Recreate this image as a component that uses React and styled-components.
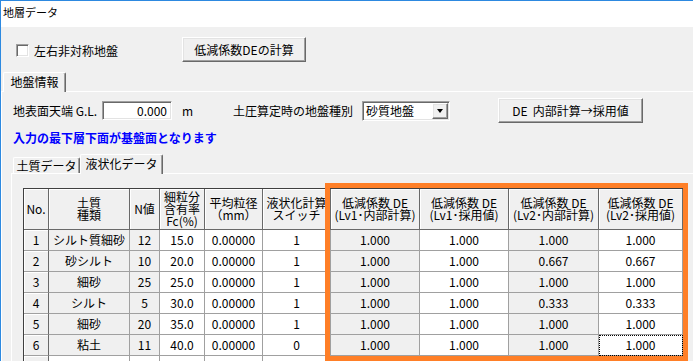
import styled, { createGlobalStyle, css } from "styled-components";

const GlobalStyle = createGlobalStyle`
  html, body {
    margin: 0;
    padding: 0;
    background: #f0f0f0;
  }
  body {
    font-family: "Noto Sans CJK JP", "Noto Sans", sans-serif;
    font-size: 12px;
    color: #000;
  }
  * { box-sizing: border-box; }
`;

const raised = css`
  border: 1px solid;
  border-color: #fff #696969 #696969 #fff;
  box-shadow: inset -1px -1px #a0a0a0, inset 1px 1px #e3e3e3;
`;

const sunken = css`
  border: 1px solid;
  border-color: #a0a0a0 #fff #fff #a0a0a0;
  box-shadow: inset 1px 1px #696969, inset -1px -1px #e3e3e3;
`;

const Window = styled.div`
  width: 693px;
  height: 361px;
  overflow: hidden;
  border-top: 1px solid #2d89e0;
  border-left: 1px solid #2d89e0;
  display: flex;
  flex-direction: column;
`;

const TitleBar = styled.div`
  height: 26px;
  flex-shrink: 0;
  background: #fff;
  padding: 3px 0 0 2px;
  font-size: 11px;
  line-height: 17px;
`;

const Client = styled.div`
  flex: 1;
  background: #f0f0f0;
`;

const TopRow = styled.div`
  display: flex;
  align-items: center;
  height: 25px;
  margin-top: 10px;
  padding-left: 15px;
`;

const CheckLabel = styled.label`
  width: 166px;
  display: flex;
  align-items: center;
  gap: 5px;
  padding-top: 2px;
`;

const CheckBox = styled.span`
  width: 13px;
  height: 13px;
  background: #fff;
  ${sunken};
`;

const Button = styled.div`
  width: ${(p) => p.$w}px;
  height: 25px;
  margin-left: ${(p) => p.$ml || 0}px;
  background: #f0f0f0;
  ${raised};
  display: flex;
  align-items: center;
  justify-content: center;
  line-height: 14px;
`;

const TabStrip = styled.div`
  display: flex;
  align-items: flex-end;
  height: 19px;
  margin-top: ${(p) => p.$mt}px;
  padding-left: ${(p) => p.$pl}px;
`;

const Tab = styled.div`
  position: relative;
  z-index: ${(p) => (p.$active ? 1 : 0)};
  width: ${(p) => p.$w}px;
  height: ${(p) => (p.$active ? 20 : 16)}px;
  margin-bottom: ${(p) => (p.$active ? -1 : 0)}px;
  padding-bottom: ${(p) => (p.$active ? 2 : 0)}px;
  background: #f0f0f0;
  border-top: 1px solid #fff;
  border-left: 1px solid #fff;
  border-right: 1px solid #696969;
  border-radius: 2px 2px 0 0;
  box-shadow: inset -1px 0 #a0a0a0;
  display: flex;
  align-items: center;
  justify-content: center;
  line-height: 14px;
`;

const Panel = styled.div`
  border-top: 1px solid #fff;
  border-left: 1px solid #fff;
  padding: ${(p) => p.$pad};
`;

const FieldRow = styled.div`
  display: flex;
  align-items: center;
  height: 25px;
  padding-left: 2px;
`;

const FieldLabel = styled.span`
  width: ${(p) => p.$w}px;
  margin-left: ${(p) => p.$ml || 0}px;
  white-space: nowrap;
`;

const TextBox = styled.div`
  width: 70px;
  height: 19px;
  background: #fff;
  ${sunken};
  text-align: right;
  padding-right: 4px;
  line-height: 17px;
`;

const Combo = styled.div`
  width: 88px;
  height: 20px;
  background: #fff;
  ${sunken};
  padding: 1px;
  display: flex;
`;

const ComboText = styled.span`
  flex: 1;
  padding-left: 2px;
  line-height: 16px;
`;

const ComboButton = styled.span`
  width: 16px;
  height: 16px;
  background: #f0f0f0;
  ${raised};
  display: flex;
  align-items: center;
  justify-content: center;
  &::before {
    content: "";
    border-left: 3.5px solid transparent;
    border-right: 3.5px solid transparent;
    border-top: 4px solid #000;
  }
`;

const Notice = styled.div`
  margin-top: 7px;
  padding-left: 2px;
  color: #0000ff;
  font-weight: bold;
  line-height: 15px;
`;

const GridWrap = styled.div`
  position: relative;
  width: 660px;
`;

const Grid = styled.div`
  display: grid;
  grid-template-columns: 25px 81px 30px 45px 58px 68px 89px 89px 90px 84px;
  grid-template-rows: 41px;
  grid-auto-rows: 21px;
  border-top: 1px solid #404040;
  border-left: 1px solid #404040;
`;

const HeadCell = styled.div`
  background: #f0f0f0;
  border-right: 1px solid #696969;
  border-bottom: 1px solid #696969;
  box-shadow: inset 1px 1px #fff;
  display: flex;
  align-items: center;
  justify-content: center;
  text-align: center;
  white-space: pre;
  line-height: 12px;
  overflow: hidden;
`;

const FixedCell = styled.div`
  background: #f0f0f0;
  border-right: 1px solid #696969;
  border-bottom: 1px solid #a0a0a0;
  box-shadow: inset 1px 1px #fff;
  text-align: center;
  line-height: 20px;
`;

const Cell = styled.div`
  background: ${(p) => (p.$gray ? "#f0f0f0" : "#fff")};
  border-right: 1px solid #a0a0a0;
  border-bottom: 1px solid #a0a0a0;
  text-align: center;
  line-height: 20px;
  white-space: nowrap;
  overflow: hidden;
  ${(p) =>
    p.$focus &&
    css`
      outline: 1px dotted #000;
      outline-offset: -1px;
    `}
`;

const Highlight = styled.div`
  position: absolute;
  left: 302px;
  top: -5px;
  width: 363px;
  height: 178px;
  border: 5px solid #ff7f27;
  pointer-events: none;
`;

const headers = [
  "No.",
  "土質\n種類",
  "N値",
  "細粒分\n含有率\nFc(%)",
  "平均粒径\n（mm）",
  "液状化計算\nスイッチ",
  "低減係数 DE\n(Lv1･内部計算)",
  "低減係数 DE\n(Lv1･採用値)",
  "低減係数 DE\n(Lv2･内部計算)",
  "低減係数 DE\n(Lv2･採用値)",
];

const grayCols = [1, 2, 6, 8];

const rows = [
  [1, "シルト質細砂", 12, "15.0", "0.00000", 1, "1.000", "1.000", "1.000", "1.000"],
  [2, "砂シルト", 10, "20.0", "0.00000", 1, "1.000", "1.000", "0.667", "0.667"],
  [3, "細砂", 25, "25.0", "0.00000", 1, "1.000", "1.000", "1.000", "1.000"],
  [4, "シルト", 5, "30.0", "0.00000", 1, "1.000", "1.000", "0.333", "0.333"],
  [5, "細砂", 20, "35.0", "0.00000", 1, "1.000", "1.000", "1.000", "1.000"],
  [6, "粘土", 11, "40.0", "0.00000", 0, "1.000", "1.000", "1.000", "1.000"],
  ["", "", "", "", "", "", "", "", "", ""],
];

const App = () => {
  return (
    <>
      <GlobalStyle />
      <Window>
        <TitleBar>地層データ</TitleBar>
        <Client>
          <TopRow>
            <CheckLabel>
              <CheckBox />
              <span>左右非対称地盤</span>
            </CheckLabel>
            <Button $w={124}>低減係数DEの計算</Button>
          </TopRow>

          <TabStrip $mt={10} $pl={2}>
            <Tab $active $w={63}>地盤情報</Tab>
          </TabStrip>

          <Panel $pad="6px 0 0 9px">
            <FieldRow>
              <FieldLabel $w={89}>地表面天端 G.L.</FieldLabel>
              <TextBox>0.000</TextBox>
              <FieldLabel $w={51} $ml={10}>m</FieldLabel>
              <FieldLabel $w={129}>土圧算定時の地盤種別</FieldLabel>
              <Combo>
                <ComboText>砂質地盤</ComboText>
                <ComboButton />
              </Combo>
              <Button $w={145} $ml={48}>DE&nbsp;&nbsp;内部計算→採用値</Button>
            </FieldRow>

            <Notice>入力の最下層下面が基盤面となります</Notice>

            <TabStrip $mt={9} $pl={2}>
              <Tab $w={67}>土質データ</Tab>
              <Tab $active $w={83}>液状化データ</Tab>
            </TabStrip>

            <Panel $pad="14px 0 0 11px">
              <GridWrap>
                <Grid>
                  {headers.map((h, i) => (
                    <HeadCell key={"h" + i}>{h}</HeadCell>
                  ))}
                  {rows.map((r, ri) =>
                    r.map((v, ci) =>
                      ci === 0 ? (
                        <FixedCell key={ri + "-" + ci}>{v}</FixedCell>
                      ) : (
                        <Cell
                          key={ri + "-" + ci}
                          $gray={grayCols.includes(ci) && v !== ""}
                          $focus={ri === 5 && ci === 9}
                        >
                          {v}
                        </Cell>
                      )
                    )
                  )}
                </Grid>
                <Highlight />
              </GridWrap>
            </Panel>
          </Panel>
        </Client>
      </Window>
    </>
  );
};

export default App;
